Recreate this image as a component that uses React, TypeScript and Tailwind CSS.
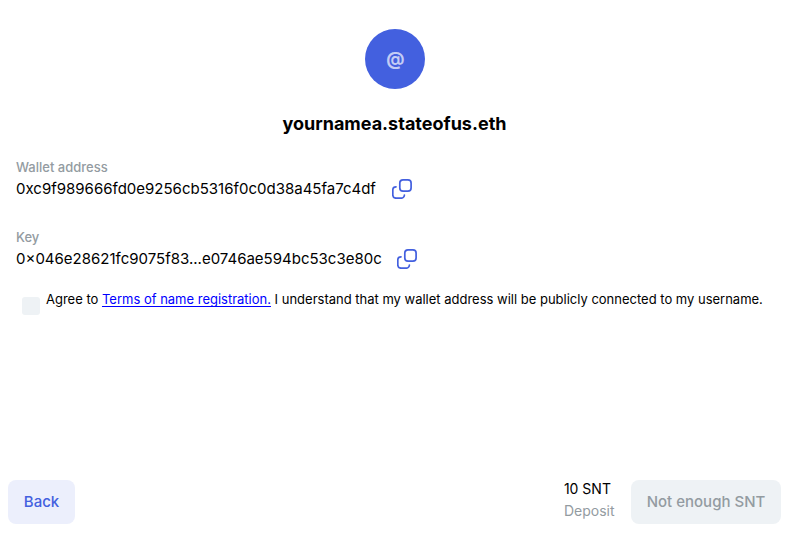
import React from "react";

function CopyIcon() {
  return (
    <svg width="20" height="20" viewBox="0 0 20 20" fill="none" stroke="#4360df" strokeWidth="1.7" strokeLinecap="round">
      <rect x="7.8" y="0.9" width="11.3" height="11.3" rx="3.2" />
      <path d="M4 7.8a3.2 3.2 0 0 0-3.2 3.2V16a3.2 3.2 0 0 0 3.2 3.2h5.2a3.2 3.2 0 0 0 3.2-3.2" />
    </svg>
  );
}

function Field({ label, value }: { label: string; value: string }) {
  return (
    <div className="h-[70px]">
      <div className="text-[13px] leading-[16px] font-medium text-[#939ba1]">{label}</div>
      <div className="mt-[2px] flex h-6 items-center gap-[15.6px]">
        <span className="text-[15px] leading-[18px] whitespace-nowrap">{value}</span>
        <CopyIcon />
      </div>
    </div>
  );
}

export default function App() {
  return (
    <main className="flex h-[535px] w-[788px] flex-col overflow-hidden bg-white font-['Inter',sans-serif] text-black">
      <div className="ml-[365px] mt-[29px] flex size-[60px] shrink-0 items-center justify-center rounded-full bg-[#4360df] pb-px pl-px text-[18px] font-bold text-[#c3ccf5]">@</div>
      <h1 className="mt-[24px] pl-px text-center text-[18px] leading-[22px] font-bold">yournamea.stateofus.eth</h1>
      <section className="mt-[24px] px-4">
        <Field label="Wallet address" value="0xc9f989666fd0e9256cb5316f0c0d38a45fa7c4df" />
        <Field label="Key" value="0×046e28621fc9075f83...e0746ae594bc53c3e80c" />
      </section>
      <label className="-mt-[8px] flex pl-[22px]">
        <span className="mt-[6px] size-[18px] rounded-[3px] bg-[#eef2f5]" />
        <span className="ml-[6px] text-[13px] leading-[16px] tracking-[-0.005px] whitespace-nowrap">
          Agree to <a className="text-[#0000ff] underline underline-offset-[2px] [text-decoration-skip-ink:none]">Terms of name registration.</a> I understand that my wallet address will be publicly connected to my username.
        </span>
      </label>
      <footer className="mt-auto mb-[11px] flex h-11 items-center pr-[7px] pl-2">
        <button className="h-11 w-[67px] rounded-lg bg-[#eceffc] text-[15px] font-medium text-[#4360df]">Back</button>
        <div className="mb-1 ml-auto text-[14px] leading-[22px]">
          <div>10 SNT</div>
          <div className="text-[#939ba1]">Deposit</div>
        </div>
        <button className="ml-[16.5px] h-11 w-[150px] rounded-lg bg-[#eef2f5] text-[15px] font-medium text-[#939ba1]">Not enough SNT</button>
      </footer>
    </main>
  );
}
